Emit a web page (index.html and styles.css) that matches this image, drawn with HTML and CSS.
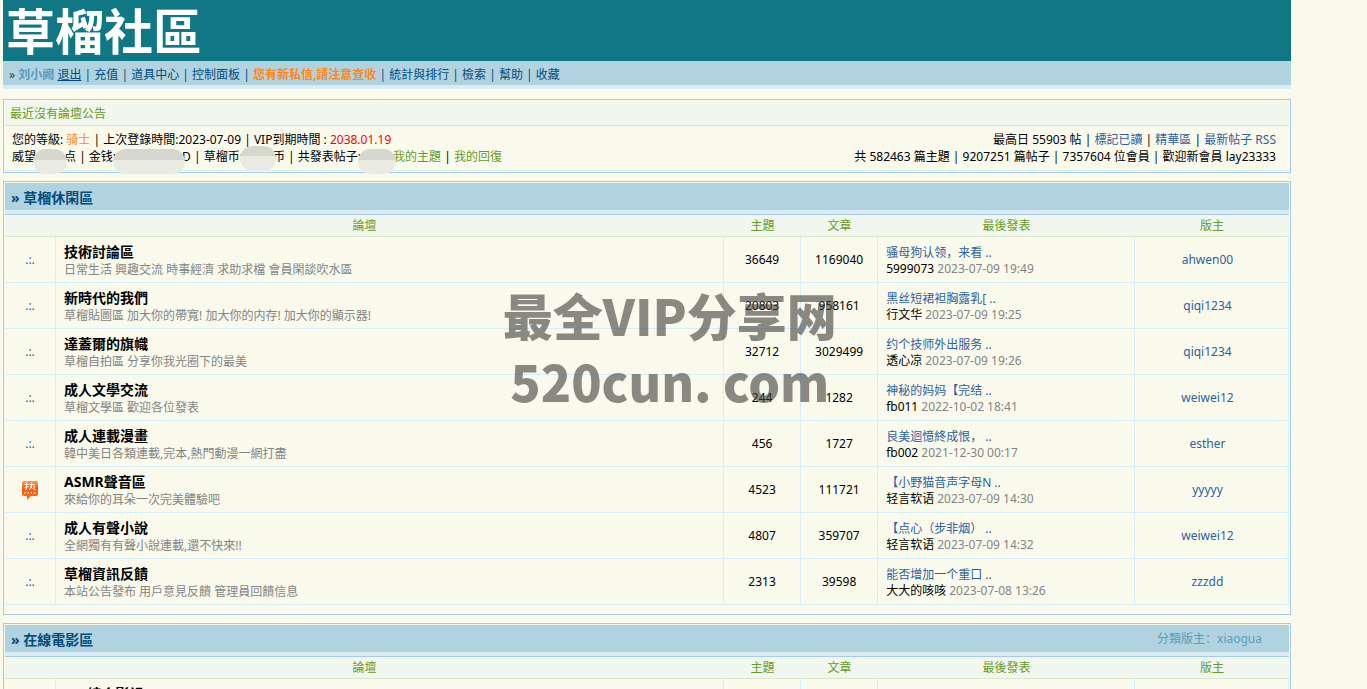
FILE: index.html
```html
<!DOCTYPE html>
<html lang="zh">
<head>
<meta charset="utf-8">
<title>草榴社區</title>
<link rel="stylesheet" href="styles.css">
</head>
<body>
<div class="page">
  <header class="banner"><h1 class="logo">草榴社區</h1></header>
  <nav class="nav">» <a class="user" href="#">刘小阙</a> <a class="logout" href="#">退出</a> | <a href="#">充值</a> | <a href="#">道具中心</a> | <a href="#">控制面板</a> | <a class="alert" href="#">您有新私信,請注意查收</a> | <a href="#">統計與排行</a> | <a href="#">檢索</a> | <a href="#">幫助</a> | <a href="#">收藏</a></nav>

  <section class="box notice">
    <h2 class="notice-title">最近沒有論壇公告</h2>
    <div class="notice-body">
      <div class="mine">
        <p>您的等級: <span class="rank">骑士</span> | 上次登錄時間:2023-07-09 | VIP到期時間 : <span class="expiry">2038.01.19</span></p>
        <p>威望<span class="mask mask-s"></span>点 | 金钱:<span class="mask mask-l"></span>D | 草榴币:<span class="mask mask-m"></span>币 | 共發表帖子:<span class="mask mask-e"></span><a class="green" href="#">我的主題</a> | <a class="green" href="#">我的回復</a></p>
      </div>
      <div class="stats">
        <p>最高日 55903 帖 | <a href="#">標記已讀</a> | <a href="#">精華區</a> | <a href="#">最新帖子</a> <a href="#">RSS</a></p>
        <p>共 582463 篇主題 | 9207251 篇帖子 | 7357604 位會員 | 歡迎新會員 lay23333</p>
      </div>
    </div>
  </section>

  <section class="box board">
    <div class="board-title"><h2>» 草榴休閑區</h2></div>
    <table class="forums">
      <colgroup><col class="c-icon"><col><col class="c-num"><col class="c-num"><col class="c-last"><col class="c-mod"></colgroup>
      <thead><tr><th colspan="2">論壇</th><th>主題</th><th>文章</th><th>最後發表</th><th>版主</th></tr></thead>
      <tbody>
        <tr><td class="icon">.:.</td><td><a class="name" href="#">技術討論區</a><p class="desc">日常生活 興趣交流 時事經濟 求助求檔 會員閑談吹水區</p></td><td class="num">36649</td><td class="num">1169040</td><td><a class="topic" href="#">骚母狗认领，来看 ..</a><p class="by"><b>5999073</b> 2023-07-09 19:49</p></td><td class="mod"><a href="#">ahwen00</a></td></tr>
        <tr><td class="icon">.:.</td><td><a class="name" href="#">新時代的我們</a><p class="desc">草榴貼圖區 加大你的帶寬! 加大你的内存! 加大你的顯示器!</p></td><td class="num">20803</td><td class="num">958161</td><td><a class="topic" href="#">黑丝短裙袒胸露乳[ ..</a><p class="by"><b>行文华</b> 2023-07-09 19:25</p></td><td class="mod"><a href="#">qiqi1234</a></td></tr>
        <tr><td class="icon">.:.</td><td><a class="name" href="#">達蓋爾的旗幟</a><p class="desc">草榴自拍區 分享你我光圈下的最美</p></td><td class="num">32712</td><td class="num">3029499</td><td><a class="topic" href="#">约个技师外出服务 ..</a><p class="by"><b>透心凉</b> 2023-07-09 19:26</p></td><td class="mod"><a href="#">qiqi1234</a></td></tr>
        <tr><td class="icon">.:.</td><td><a class="name" href="#">成人文學交流</a><p class="desc">草榴文學區 歡迎各位發表</p></td><td class="num">244</td><td class="num">1282</td><td><a class="topic" href="#">神秘的妈妈【完结 ..</a><p class="by"><b>fb011</b> 2022-10-02 18:41</p></td><td class="mod"><a href="#">weiwei12</a></td></tr>
        <tr><td class="icon">.:.</td><td><a class="name" href="#">成人連載漫畫</a><p class="desc">韓中美日各類連載,完本,熱門動漫一網打盡</p></td><td class="num">456</td><td class="num">1727</td><td><a class="topic" href="#">良美迴憶終成恨， ..</a><p class="by"><b>fb002</b> 2021-12-30 00:17</p></td><td class="mod"><a href="#">esther</a></td></tr>
        <tr><td class="icon"><svg class="hot" viewBox="0 0 18 20" role="img" aria-label="热"><defs><linearGradient id="flame" x1="0" y1="0" x2="0" y2="1"><stop offset="0" stop-color="#ff9a58"/><stop offset=".4" stop-color="#f75a08"/><stop offset="1" stop-color="#ff6a10"/></linearGradient></defs><path d="M3 1h12q2 0 2 2v11q0 2-2 2h-5l-4 4v-4H3q-2 0-2-2V3q0-2 2-2z" fill="url(#flame)"/><path d="M3.500 4.500h4M5.500 2.500v6.500q0 1-1.500 1M3.500 8l4-1.500M8.500 4.500h4.500v4.500q0 1 1.500 1M10.700 2.500q.3 5-2.500 7.500M9 6.500l2.500 2M4.500 12l-1 2M7.200 12v1.700M10.200 12l.5 1.700M13 12l1.200 2" fill="none" stroke="#fff" stroke-width="1"/></svg></td><td><a class="name" href="#">ASMR聲音區</a><p class="desc">來給你的耳朵一次完美體驗吧</p></td><td class="num">4523</td><td class="num">111721</td><td><a class="topic" href="#">【小野猫音声字母N ..</a><p class="by"><b>轻言软语</b> 2023-07-09 14:30</p></td><td class="mod"><a href="#">yyyyy</a></td></tr>
        <tr><td class="icon">.:.</td><td><a class="name" href="#">成人有聲小說</a><p class="desc">全網獨有有聲小說連載,還不快來!!</p></td><td class="num">4807</td><td class="num">359707</td><td><a class="topic" href="#">【点心（步非烟） ..</a><p class="by"><b>轻言软语</b> 2023-07-09 14:32</p></td><td class="mod"><a href="#">weiwei12</a></td></tr>
        <tr><td class="icon">.:.</td><td><a class="name" href="#">草榴資訊反饋</a><p class="desc">本站公告發布 用戶意見反饋 管理員回饋信息</p></td><td class="num">2313</td><td class="num">39598</td><td><a class="topic" href="#">能否增加一个重口 ..</a><p class="by"><b>大大的咳咳</b> 2023-07-08 13:26</p></td><td class="mod"><a href="#">zzzdd</a></td></tr>
      </tbody>
    </table>
  </section>

  <section class="box board">
    <div class="board-title"><h2>» 在線電影區</h2><a href="#">分類版主：xiaogua</a></div>
    <table class="forums">
      <colgroup><col class="c-icon"><col><col class="c-num"><col class="c-num"><col class="c-last"><col class="c-mod"></colgroup>
      <thead><tr><th colspan="2">論壇</th><th>主題</th><th>文章</th><th>最後發表</th><th>版主</th></tr></thead>
      <tbody>
        <tr><td class="icon"></td><td><a class="name" href="#">VIP綜合影視</a><p class="desc">&nbsp;</p></td><td class="num"></td><td class="num"></td><td></td><td class="mod"></td></tr>
      </tbody>
    </table>
  </section>
</div>
<div class="watermark">最全VIP分享网<br>520cun. com</div>
</body>
</html>
```
FILE: styles.css
```css
* { box-sizing: border-box; }
html { height: 100%; overflow: hidden; }
body {
  height: 100%;
  margin: 0;
  overflow: hidden;
  position: relative;
  background: #fafaec;
  color: #000;
  font: 12px/17px "Noto Sans", "Noto Sans CJK SC", sans-serif;
}
h1, h2, p { margin: 0; }
a { color: #2f5fa1; text-decoration: none; }
.page { margin: 0 76px 0 3px; }

.banner { height: 61px; padding-left: 3px; background: #107884; }
.logo { color: #fff; font-size: 49px; line-height: 58px; font-weight: 700; font-family: "Noto Sans CJK SC", sans-serif; }

.nav {
  height: 28px;
  padding-left: 6px;
  line-height: 27px;
  background: #b1d3e0;
  border-bottom: 4px solid #daebf3;
  color: #014c7d;
}
.nav a { color: #014c7d; }
.nav .logout { text-decoration: underline; }
.nav .user { color: #5a9bbd; font-weight: 700; }
.nav .alert { color: #fa891b; font-weight: 700; }

.box { border: 1px solid #a6cbe7; padding: 1px; margin-bottom: 8px; }
.notice { margin-top: 10px; }
.notice-title {
  height: 25px;
  padding-left: 5px;
  line-height: 25px;
  font-size: 12px;
  font-weight: 400;
  color: #659b28;
  background: #f1f7ee;
  border-bottom: 1px solid #d8e8cd;
}
.notice-body {
  display: flex;
  justify-content: space-between;
  padding: 5px 13px 5px 7px;
  white-space: nowrap;
  border-bottom: 1px solid #d4effa;
}
.stats { text-align: right; }
.rank { color: #fa891b; }
.expiry { color: #f00; }
.green { color: #659b28; }

.mask { display: inline-block; height: 12px; position: relative; }
.mask::after {
  content: "";
  position: absolute;
  top: 0;
  left: -3px;
  right: -3px;
  height: 25px;
  border-radius: 16px;
  background: linear-gradient(#d6d8d0 42%, #e9ebe3 42%);
}
.mask-s { width: 28px; }
.mask-l { width: 66px; }
.mask-m { width: 30px; }
.mask-m::after { top: -3px; }
.mask-e { width: 32px; }

.board { padding-bottom: 9px; }
.board-title {
  display: flex;
  justify-content: space-between;
  height: 32px;
  padding: 0 27px 0 6px;
  line-height: 30px;
  background: #b1d3e0;
  border-bottom: 1px solid #a6cbe7;
  box-shadow: inset 0 -4px #daebf3;
}
.board-title h2 { font-size: 14px; color: #014c7d; }
.board-title a { color: #5a9bbd; line-height: 27px; }

.forums { width: 100%; table-layout: fixed; border-collapse: separate; border-spacing: 0; }
.c-icon { width: 51px; }
.c-num { width: 6%; }
.c-last { width: 20%; }
.c-mod { width: 12%; }
.forums th {
  height: 22px;
  padding: 0;
  line-height: 21px;
  font-weight: 400;
  color: #659b28;
  background: #f1f7ee;
  border-bottom: 1px solid #d8e8cd;
}
.forums td {
  height: 46px;
  padding: 2px 8px 0;
  white-space: nowrap;
  border-right: 1px solid #d4effa;
  border-bottom: 1px solid #d4effa;
}
.forums .icon { padding: 0; text-align: center; color: #2f5fa1; }
.forums .num { padding: 0; text-align: center; }
.forums .mod { padding: 0 8px 0 0; text-align: center; }
.hot { display: block; width: 18px; height: 20px; margin: 0 auto; }
.name { display: block; color: #000; font-size: 14px; line-height: 18px; font-weight: 700; }
.desc { color: #848484; line-height: 17px; }
.topic { display: block; line-height: 16px; }
.by { color: #848484; line-height: 15px; }
.by b { color: #000; font-weight: 400; }

.watermark {
  position: absolute;
  top: 281px;
  left: 49%;
  transform: translateX(-50%);
  text-align: center;
  white-space: nowrap;
  pointer-events: none;
  color: rgba(62, 62, 58, .6);
  font: 900 50px/66px "Noto Sans CJK SC", sans-serif;
}
```
